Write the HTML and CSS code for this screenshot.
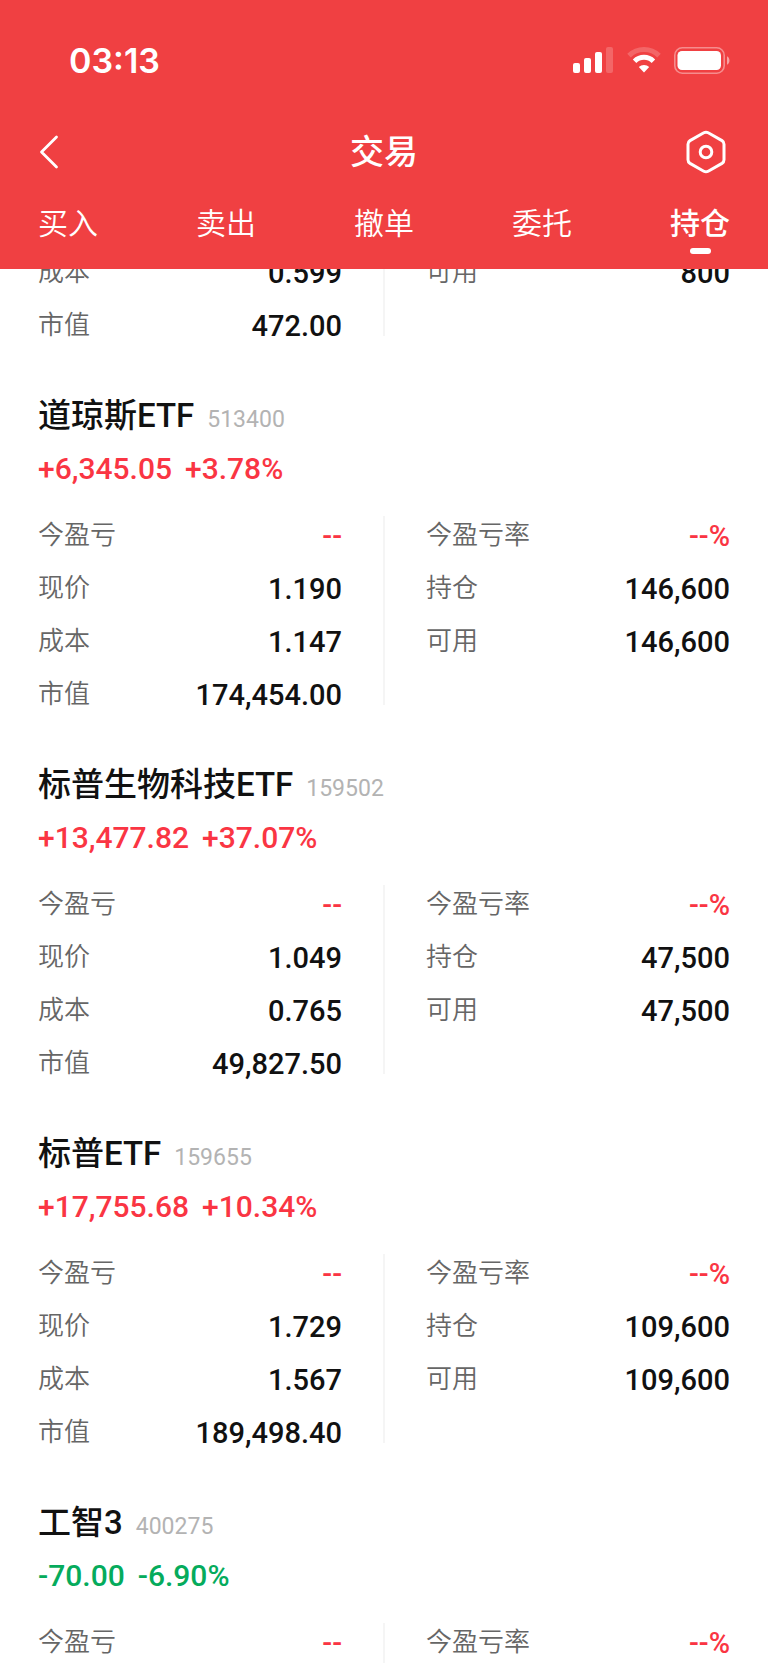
FILE: index.html
```html
<!DOCTYPE html>
<html lang="zh-CN">
  <head>
    <meta charset="utf-8" />
    <meta name="viewport" content="width=device-width, initial-scale=1" />
    <title>交易</title>
    <link rel="stylesheet" href="styles.css">
  </head>
  <body>
    <header class="header">
      <div class="status">
        <span class="time">03:13</span>
        <div class="status-icons">
          <svg width="41" height="26" viewBox="0 0 41 26" fill="#fff">
            <rect x="0" y="16" width="7" height="10" rx="2" />
            <rect x="11" y="11" width="7" height="15" rx="2" />
            <rect x="22" y="5" width="7" height="21" rx="2" />
            <rect x="33" y="0" width="7" height="26" rx="2" opacity="0.2" />
          </svg>
          <svg width="34" height="26" viewBox="0 0 34 26" fill="none" stroke="#fff">
            <path d="M2 8.6A21.5 21.5 0 0 1 32 8.6" stroke-width="5" opacity="0.2" />
            <path d="M7.6 14.2A13.4 13.4 0 0 1 26.4 14.2" stroke-width="5" />
            <path d="M17 25.4L11.8 20A7.6 7.6 0 0 1 22.2 20Z" fill="#fff" stroke="none" />
          </svg>
          <svg width="56" height="27" viewBox="0 0 56 27">
            <rect x="0.8" y="0.8" width="49.4" height="25.4" rx="7.5" fill="none" stroke="#fff" stroke-width="1.6" opacity="0.4" />
            <rect x="3.5" y="4" width="43.5" height="19" rx="4.5" fill="#fff" />
            <path d="M53 9.3C56.3 11 56.3 16 53 17.7Z" fill="#fff" opacity="0.5" />
          </svg>
        </div>
      </div>

      <div class="nav">
        <button class="icon-button" type="button" aria-label="返回">
          <svg width="24" height="36" viewBox="0 0 24 36" fill="none" stroke="#fff" stroke-width="2.8" stroke-linecap="round" stroke-linejoin="round">
            <path d="M18.5 3L3.5 18L18.5 33" />
          </svg>
        </button>
        <h1 class="title">交易</h1>
        <button class="icon-button icon-button-right" type="button" aria-label="设置">
          <svg width="44" height="44" viewBox="0 0 44 44" fill="none" stroke="#fff" stroke-width="3" stroke-linejoin="round">
            <path d="M17.8 2.8Q20 1.6 22.2 2.8L36 10.6Q38 11.8 38 14.2V29.8Q38 32.2 36 33.4L22.2 41.2Q20 42.4 17.8 41.2L4 33.4Q2 32.2 2 29.8V14.2Q2 11.8 4 10.6Z" />
            <circle cx="20" cy="22" r="5.8" />
          </svg>
        </button>
      </div>

      <nav class="tabs">
        <a class="tab" href="#buy">买入</a>
        <a class="tab" href="#sell">卖出</a>
        <a class="tab" href="#cancel">撤单</a>
        <a class="tab" href="#orders">委托</a>
        <a class="tab tab-active" href="#holdings">持仓</a>
      </nav>
    </header>

    <main class="list" id="holdings">
      <!-- scrolled under the header, only its last rows show -->
      <section class="holding-scrolled">
        <div class="detail">
          <dl class="column">
            <div class="row"><dt>成本</dt><dd>0.599</dd></div>
            <div class="row"><dt>市值</dt><dd>472.00</dd></div>
          </dl>
          <div class="divider"></div>
          <dl class="column">
            <div class="row"><dt>可用</dt><dd>800</dd></div>
          </dl>
        </div>
      </section>

      <section class="holding">
        <h2 class="name">道琼斯ETF<span class="code">513400</span></h2>
        <p class="profit"><span>+6,345.05</span><span>+3.78%</span></p>
        <div class="detail">
          <dl class="column">
            <div class="row"><dt>今盈亏</dt><dd class="up">--</dd></div>
            <div class="row"><dt>现价</dt><dd>1.190</dd></div>
            <div class="row"><dt>成本</dt><dd>1.147</dd></div>
            <div class="row"><dt>市值</dt><dd>174,454.00</dd></div>
          </dl>
          <div class="divider"></div>
          <dl class="column">
            <div class="row"><dt>今盈亏率</dt><dd class="up">--%</dd></div>
            <div class="row"><dt>持仓</dt><dd>146,600</dd></div>
            <div class="row"><dt>可用</dt><dd>146,600</dd></div>
          </dl>
        </div>
      </section>

      <section class="holding">
        <h2 class="name">标普生物科技ETF<span class="code">159502</span></h2>
        <p class="profit"><span>+13,477.82</span><span>+37.07%</span></p>
        <div class="detail">
          <dl class="column">
            <div class="row"><dt>今盈亏</dt><dd class="up">--</dd></div>
            <div class="row"><dt>现价</dt><dd>1.049</dd></div>
            <div class="row"><dt>成本</dt><dd>0.765</dd></div>
            <div class="row"><dt>市值</dt><dd>49,827.50</dd></div>
          </dl>
          <div class="divider"></div>
          <dl class="column">
            <div class="row"><dt>今盈亏率</dt><dd class="up">--%</dd></div>
            <div class="row"><dt>持仓</dt><dd>47,500</dd></div>
            <div class="row"><dt>可用</dt><dd>47,500</dd></div>
          </dl>
        </div>
      </section>

      <section class="holding">
        <h2 class="name">标普ETF<span class="code">159655</span></h2>
        <p class="profit"><span>+17,755.68</span><span>+10.34%</span></p>
        <div class="detail">
          <dl class="column">
            <div class="row"><dt>今盈亏</dt><dd class="up">--</dd></div>
            <div class="row"><dt>现价</dt><dd>1.729</dd></div>
            <div class="row"><dt>成本</dt><dd>1.567</dd></div>
            <div class="row"><dt>市值</dt><dd>189,498.40</dd></div>
          </dl>
          <div class="divider"></div>
          <dl class="column">
            <div class="row"><dt>今盈亏率</dt><dd class="up">--%</dd></div>
            <div class="row"><dt>持仓</dt><dd>109,600</dd></div>
            <div class="row"><dt>可用</dt><dd>109,600</dd></div>
          </dl>
        </div>
      </section>

      <section class="holding">
        <h2 class="name">工智3<span class="code">400275</span></h2>
        <p class="profit profit-down"><span>-70.00</span><span>-6.90%</span></p>
        <div class="detail detail-last">
          <dl class="column">
            <div class="row"><dt>今盈亏</dt><dd class="up">--</dd></div>
          </dl>
          <div class="divider"></div>
          <dl class="column">
            <div class="row"><dt>今盈亏率</dt><dd class="up">--%</dd></div>
          </dl>
        </div>
      </section>
    </main>
  </body>
</html>
```
FILE: styles.css
```css
* {
  box-sizing: border-box;
}
body {
  display: flex;
  flex-direction: column;
  height: 100vh;
  margin: 0;
  overflow: hidden;
  background-color: #fff;
  color: #111;
  font-family: 'Roboto', 'Noto Sans CJK SC', sans-serif;
}
h1,
h2,
p,
dl,
dd {
  margin: 0;
}

/* header */
.header {
  flex: none;
  padding: 35px 38px 0;
  background-color: #f04042;
  color: #fff;
}
.status {
  display: flex;
  align-items: center;
  justify-content: space-between;
  height: 50px;
}
.time {
  padding-left: 31px;
  font: 600 34px 'Inter', sans-serif;
}
.status-icons {
  display: flex;
  align-items: center;
  gap: 13px;
}
.nav {
  display: grid;
  grid-template-columns: 1fr auto 1fr;
  align-items: center;
  height: 56px;
  margin-top: 39px;
}
.title {
  font-size: 34px;
  font-weight: 500;
  line-height: 50px;
}
.icon-button {
  display: flex;
  justify-self: start;
  padding: 0;
  border: 0;
  background: none;
  cursor: pointer;
}
.icon-button-right {
  justify-self: end;
}
.tabs {
  display: flex;
  justify-content: space-between;
  height: 89px;
  padding-top: 21px;
}
.tab {
  display: flex;
  flex-direction: column;
  align-items: center;
  color: #fff;
  font-size: 30px;
  font-weight: 350;
  line-height: 46px;
  text-decoration: none;
}
.tab-active {
  font-weight: 500;
}
.tab-active::after {
  content: '';
  width: 21px;
  height: 6px;
  margin-top: 1px;
  border-radius: 3px;
  background-color: #fff;
}

/* holdings */
.list {
  flex: 1;
  min-height: 0;
  overflow: hidden;
  padding: 0 38px;
}
.holding-scrolled {
  margin-top: -16px;
}
.holding {
  padding-top: 47px;
}
.name {
  display: flex;
  align-items: baseline;
  gap: 13px;
  height: 50px;
  font-size: 33px;
  font-weight: 500;
  line-height: 50px;
}
.code {
  color: #b3b3b3;
  font-size: 23px;
  font-weight: 400;
}
.profit {
  display: flex;
  gap: 13px;
  margin: 3px 0 22px;
  color: #fa3543;
  font-size: 30px;
  font-weight: 500;
  line-height: 50px;
}
.profit-down {
  color: #05ab5c;
}
.detail {
  display: grid;
  grid-template-columns: 1fr 2px 1fr;
  column-gap: 41px;
}
.detail-last {
  min-height: 60px;
}
.divider {
  margin-bottom: 8px;
  background-color: #f5f5f5;
}
.column {
  display: flex;
  flex-direction: column;
  gap: 15px;
}
.row {
  display: flex;
  justify-content: space-between;
  height: 38px;
  line-height: 38px;
}
dt {
  color: #666;
  font-size: 26px;
  font-weight: 350;
}
dd {
  font-size: 29px;
  font-weight: 500;
  line-height: 40px;
}
.up {
  color: #fa3543;
}
```
